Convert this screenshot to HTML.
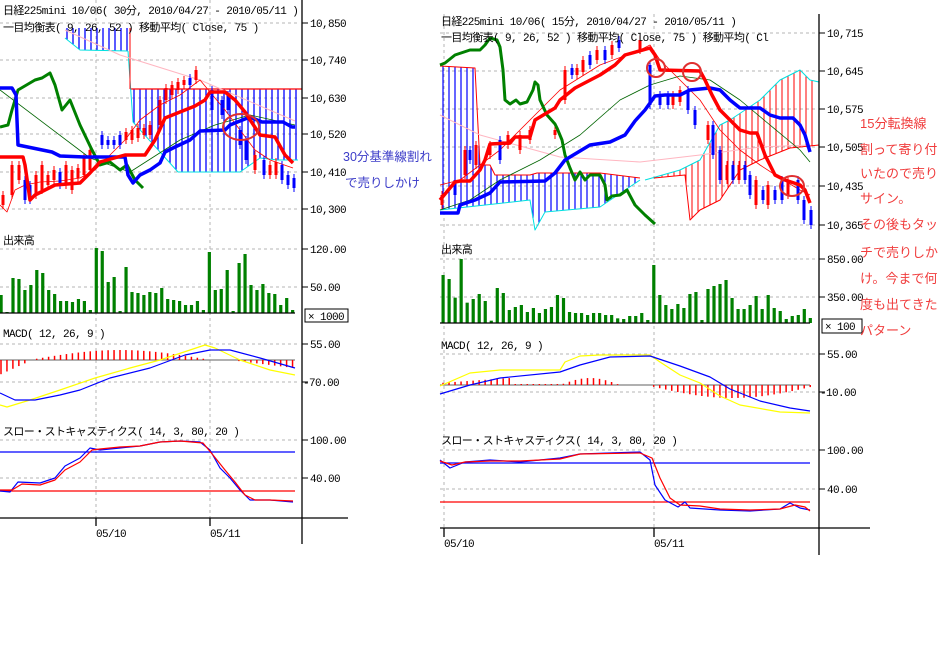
<!DOCTYPE html>
<html><head><meta charset="utf-8"><style>
html,body{margin:0;padding:0;background:#fff;width:948px;height:652px;overflow:hidden}
svg{display:block}
.t{font-family:"Liberation Mono","Noto Sans CJK JP",monospace;font-size:11px;letter-spacing:-0.6px;fill:#000}
.a{font-family:"Liberation Sans","Noto Sans CJK JP",sans-serif;font-size:13px;fill:#f03c3c}
</style></head><body>
<svg id="s" width="948" height="652" xmlns="http://www.w3.org/2000/svg">
<g id="g"></g>
<g stroke="#000" stroke-width="1.3" fill="none">
<line x1="302" y1="0" x2="302" y2="544"/>
<line x1="0" y1="313" x2="295" y2="313"/>
<line x1="0" y1="518" x2="348" y2="518"/>
<line x1="96" y1="518" x2="96" y2="526"/>
<line x1="210" y1="518" x2="210" y2="526"/>
<rect x="305" y="309" width="43" height="13" stroke-width="1"/>
<line x1="819" y1="14" x2="819" y2="555"/>
<line x1="440" y1="323" x2="810" y2="323"/>
<line x1="440" y1="528" x2="870" y2="528"/>
<line x1="444" y1="528" x2="444" y2="537"/>
<line x1="654" y1="528" x2="654" y2="537"/>
<rect x="822" y="319" width="40" height="14" stroke-width="1"/>
</g>
<g stroke="#000" stroke-width="1">
<line x1="302" y1="23" x2="308" y2="23"/><line x1="302" y1="60" x2="308" y2="60"/><line x1="302" y1="98" x2="308" y2="98"/><line x1="302" y1="134" x2="308" y2="134"/><line x1="302" y1="172" x2="308" y2="172"/><line x1="302" y1="209" x2="308" y2="209"/>
<line x1="302" y1="249" x2="308" y2="249"/><line x1="302" y1="287" x2="308" y2="287"/><line x1="302" y1="344" x2="308" y2="344"/><line x1="302" y1="382" x2="308" y2="382"/><line x1="302" y1="440" x2="308" y2="440"/><line x1="302" y1="478" x2="308" y2="478"/>
<line x1="819" y1="33" x2="825" y2="33"/><line x1="819" y1="71" x2="825" y2="71"/><line x1="819" y1="109" x2="825" y2="109"/><line x1="819" y1="147" x2="825" y2="147"/><line x1="819" y1="186" x2="825" y2="186"/><line x1="819" y1="225" x2="825" y2="225"/>
<line x1="819" y1="259" x2="825" y2="259"/><line x1="819" y1="297" x2="825" y2="297"/><line x1="819" y1="354" x2="825" y2="354"/><line x1="819" y1="392" x2="825" y2="392"/><line x1="819" y1="450" x2="825" y2="450"/><line x1="819" y1="489" x2="825" y2="489"/>
</g>
<g class="t">
<text x="3" y="14">日経225mini 10/06( 30分, 2010/04/27 - 2010/05/11 )</text>
<text x="3" y="31">一目均衡表( 9, 26, 52 )   移動平均( Close, 75 )</text>
<text x="310" y="27">10,850</text><text x="310" y="64">10,740</text><text x="310" y="102">10,630</text><text x="310" y="138">10,520</text><text x="310" y="176">10,410</text><text x="310" y="213">10,300</text>
<text x="3" y="244">出来高</text>
<text x="310" y="253">120.00</text><text x="310" y="291">50.00</text>
<text x="308" y="320">× 1000</text>
<text x="3" y="337">MACD( 12, 26, 9 )</text>
<text x="310" y="348">55.00</text><text x="303" y="386">-70.00</text>
<text x="3" y="435">スロー・ストキャスティクス( 14, 3, 80, 20 )</text>
<text x="310" y="444">100.00</text><text x="310" y="482">40.00</text>
<text x="96" y="537">05/10</text><text x="210" y="537">05/11</text>
<text x="441" y="25">日経225mini 10/06( 15分, 2010/04/27 - 2010/05/11 )</text>
<text x="441" y="41">一目均衡表( 9, 26, 52 )   移動平均( Close, 75 )   移動平均( Cl</text>
<text x="827" y="37">10,715</text><text x="827" y="75">10,645</text><text x="827" y="113">10,575</text><text x="827" y="151">10,505</text><text x="827" y="190">10,435</text><text x="827" y="229">10,365</text>
<text x="441" y="253">出来高</text>
<text x="827" y="263">850.00</text><text x="827" y="301">350.00</text>
<text x="825" y="330">× 100</text>
<text x="441" y="349">MACD( 12, 26, 9 )</text>
<text x="827" y="358">55.00</text><text x="820" y="396">-10.00</text>
<text x="441" y="444">スロー・ストキャスティクス( 14, 3, 80, 20 )</text>
<text x="827" y="454">100.00</text><text x="827" y="493">40.00</text>
<text x="444" y="547">05/10</text><text x="654" y="547">05/11</text>
</g>
<g style="font-family:'Liberation Sans','Noto Sans CJK JP',sans-serif;font-size:12.5px;fill:#3c3cc8">
<text x="343" y="161">30分基準線割れ</text><text x="345" y="187">で売りしかけ</text>
</g>
<g class="a">
<text x="860" y="128">15分転換線</text><text x="860" y="154">割って寄り付</text><text x="860" y="178">いたので売り</text><text x="860" y="203">サイン。</text><text x="860" y="229">その後もタッ</text><text x="860" y="257">チで売りしか</text><text x="860" y="283">け。今まで何</text><text x="860" y="309">度も出てきた</text><text x="860" y="335">パターン</text>
</g>
</svg>
<script>
var g=document.getElementById('g'),NS='http://www.w3.org/2000/svg';
function el(n,a){var e=document.createElementNS(NS,n);for(var k in a)e.setAttribute(k,a[k]);g.appendChild(e);return e}
function L(x1,y1,x2,y2,c,w,d){var o={x1:x1,y1:y1,x2:x2,y2:y2,stroke:c,'stroke-width':w||1};if(d)o['stroke-dasharray']=d;el('line',o)}
function P(p,c,w){el('polyline',{points:p,fill:'none',stroke:c,'stroke-width':w||1,'stroke-linejoin':'round'})}
var D='3,3',gc='#b4b4b4';
[23,60,98,134,172,209,249,287,344,382,440,478].forEach(function(y){L(0,y,300,y,gc,1,D)});
[96,210].forEach(function(x){L(x,0,x,518,gc,1,D)});
[33,71,109,147,186,225,259,297,354,392,450,489].forEach(function(y){L(440,y,817,y,gc,1,D)});
[444,654].forEach(function(x){L(x,14,x,528,gc,1,D)});
function yAt(pts,x){for(var i=0;i<pts.length-1;i++){var a=pts[i],b=pts[i+1];if(x>=a[0]&&x<=b[0]){return a[1]+(b[1]-a[1])*(x-a[0])/((b[0]-a[0])||1)}}return pts[pts.length-1][1]}
function S(p){return p.map(function(q){return q.join(',')}).join(' ')}
var lb1=[[65,38],[80,50],[128,51]];
for(var x=67;x<128;x+=6)L(x,28,x,yAt(lb1,x),'#0000ff',1.3);
P(S(lb1),'#00e0e0',1);
var lt=[[130,89],[302,89]],lb=[[128,51],[133,122],[178,172],[240,172],[260,158],[278,160],[298,160]];
for(var x=134;x<300;x+=6)L(x,89,x,yAt(lb,x),'#0000ff',1.3);
P(S(lt),'#ff0000',1.2);P(S(lb),'#00e0e0',1);
L(130,28,130,89,'#ff0000',1);
P('65,30 120,55 200,80 295,121','#ffb6c1',1);
P('0,90 90,158 130,172 180,140 215,125 250,115 295,125','#006400',0.8);
P('0,205 7,212 15,190 25,185 40,182 60,181 80,178 95,170 110,155 125,140 140,120 160,105 180,95 200,80 210,92 225,110 240,130 255,150 270,160 293,168','#ff0000',0.8);
var lc=[[3,195,205,'r'],[12,165,195,'r'],[19,165,180,'r'],[25,180,200,'b'],[30,185,200,'b'],[36,175,195,'r'],[42,165,190,'r'],[48,175,185,'r'],[54,170,180,'r'],[60,172,185,'b'],[66,165,185,'r'],[72,170,190,'r'],[78,168,178,'r'],[84,158,175,'r'],[90,150,170,'r'],[102,135,145,'b'],[108,140,145,'b'],[114,140,145,'b'],[120,135,145,'b'],[126,132,140,'r'],[132,130,140,'r'],[138,128,138,'r'],[144,128,135,'r'],[150,125,135,'r'],[160,100,125,'r'],[166,88,100,'r'],[172,85,95,'r'],[178,82,90,'r'],[184,80,85,'r'],[190,78,85,'b'],[196,70,80,'r'],[212,90,110,'b'],[222,100,115,'b'],[228,95,110,'b'],[240,130,145,'b'],[246,140,160,'b'],[255,155,170,'r'],[264,160,175,'b'],[270,165,175,'r'],[276,162,175,'r'],[282,165,180,'b'],[288,175,185,'b'],[294,178,188,'b']];
lc.forEach(function(c){var col=c[3]=='r'?'#ff0000':'#0000ff';L(c[0],c[1]-4,c[0],c[2]+4,col,1);el('rect',{x:c[0]-1.5,y:c[1],width:3,height:c[2]-c[1],fill:col})});
P('0,127 8,125 12,110 18,90 35,80 42,78 50,73 55,85 62,110 70,100 80,125 92,150 100,165 110,162 120,170 127,165 135,180 143,188','#008000',3);
P('0,88 12,88 16,95 18,145 52,152 60,156 85,157 125,157 128,175 133,183 140,175 150,170 160,163 165,152 175,147 190,140 200,131 225,130 230,125 250,117 262,122 283,122 292,127 295,127','#0000ff',3.5);
P('0,157 23,157 25,165 30,200 35,195 45,190 55,185 80,183 90,173 100,162 125,155 145,155 155,140 165,118 180,112 195,106 205,100 210,92 225,92 235,100 245,112 260,135 275,137 285,155 293,163','#ff0000',3.5);
el('ellipse',{cx:241,cy:127,rx:18,ry:13,fill:'none',stroke:'#e03030','stroke-width':2});
var lv=[295,312,278,279,290,285,270,273,290,294,301,301,302,299,301,310,248,251,282,277,311,267,292,293,295,292,293,288,299,300,301,305,305,301,310,252,290,289,270,311,263,254,285,290,284,293,294,305,298,310];
lv.forEach(function(t,i){var x=1+i*5.95;el('rect',{x:x-1.5,y:t,width:3.2,height:313-t,fill:'#008000'})});
L(0,360,295,360,'#808080',1.2);
for(var i=0;i<50;i++){var x=1+i*5.95,h;if(x<30)h=(30-x)/2.2+1;else if(x<35)h=0;else if(x<205)h=-Math.sin((x-35)/170*Math.PI)*9-1;else if(x<230)h=0;else h=(x-230)/8;if(Math.abs(h)>0.5)L(x,360,x,360+h,'#ff0000',1.5)}
P('0,405 7,407 30,400 60,390 95,378 130,368 160,360 190,350 205,345 215,348 240,360 270,370 295,375','#ffff00',1.2);
P('0,393 15,400 35,400 60,395 80,390 110,378 150,368 185,355 210,350 230,350 260,358 295,368','#0000ff',1.2);
L(0,452,295,452,'#0000ff',1.2);L(0,491,295,491,'#ff0000',1.2);
P('0,491 10,492 18,482 40,483 55,478 65,466 80,458 90,448 100,450 120,448 140,446 160,442 180,441 200,442 210,450 220,468 230,478 240,490 250,500 270,500 293,502','#0000ff',1.2);
P('0,490 12,490 22,484 40,485 55,480 65,470 80,462 92,450 100,449 120,447 140,446 160,442 180,441 203,443 213,455 225,470 235,482 245,495 255,500 270,500 293,501','#ff0000',1.2);
var rt=[[440,66],[475,68],[480,165],[490,165],[495,175],[530,175],[537,173],[600,173],[640,178]],rb=[[440,210],[530,200],[535,230],[545,212],[600,207],[640,180]];
for(var x=443;x<640;x+=6)L(x,yAt(rt,x),x,yAt(rb,x),'#0000ff',1.2);
P(S(rt),'#ff0000',1);P(S(rb),'#00e0e0',1);
var ct=[[645,180],[680,170],[700,160],[720,125],[730,120],[760,100],[780,80],[800,70],[810,80],[819,82]],cb=[[654,178],[685,175],[690,220],[700,210],[720,200],[740,170],[760,160],[790,148],[800,147],[819,145]];
for(var x=656;x<818;x+=6){var a=yAt(ct,x),b=yAt(cb,x);L(x,Math.min(a,b),x,Math.max(a,b),'#ff0000',1)}
P(S(ct),'#00e0e0',1);P(S(cb),'#ff0000',1);
P('440,115 480,135 560,157 640,162 700,155 760,147 810,145','#ffb6c1',1);
P('440,210 470,200 500,180 540,160 580,135 620,100 650,85 680,76 710,80 740,100 770,125 800,150 810,162','#006400',0.8);
P('440,185 460,180 480,165 500,150 520,130 540,110 560,90 600,65 640,50 650,45 660,60 680,80 700,100 720,130 740,150 760,165 780,178 800,190 810,195','#ff0000',0.8);
var rc=[[442,195,205,'r'],[455,180,195,'b'],[465,150,175,'r'],[470,150,160,'b'],[476,145,165,'r'],[490,145,155,'r'],[500,140,160,'b'],[508,135,145,'r'],[520,135,150,'r'],[530,130,140,'r'],[555,130,135,'r'],[565,70,100,'r'],[572,68,75,'b'],[577,68,75,'r'],[583,60,72,'r'],[590,55,65,'b'],[597,50,60,'r'],[605,50,60,'b'],[612,45,55,'r'],[619,40,48,'b'],[640,40,50,'r'],[650,65,105,'b'],[660,95,105,'b'],[668,95,105,'b'],[673,95,105,'r'],[680,90,102,'r'],[688,90,110,'b'],[695,110,125,'b'],[708,125,140,'r'],[713,125,155,'b'],[720,150,180,'b'],[727,165,180,'r'],[733,165,180,'b'],[739,165,180,'r'],[745,165,180,'b'],[750,175,195,'b'],[756,180,205,'r'],[763,190,200,'b'],[768,185,205,'r'],[775,190,200,'b'],[782,180,200,'b'],[788,180,195,'r'],[798,180,200,'b'],[804,200,220,'b'],[811,210,225,'b']];
rc.forEach(function(c){var col=c[3]=='r'?'#ff0000':'#0000ff';L(c[0],c[1]-4,c[0],c[2]+4,col,1);el('rect',{x:c[0]-1.5,y:c[1],width:3,height:c[2]-c[1],fill:col})});
P('440,65 445,63 455,55 470,50 480,50 485,45 490,38 497,40 500,47 503,70 505,100 510,104 516,100 520,104 527,102 533,90 535,82 538,85 540,100 547,115 555,124 557,128 562,140 565,155 570,168 575,180 580,172 585,180 590,175 600,175 605,185 607,200 612,196 620,195 627,190 635,205 645,215 655,224','#008000',3);
P('440,213 458,213 460,205 475,200 490,193 500,182 545,181 555,173 565,160 590,145 610,142 625,135 635,121 645,110 655,96 665,95 680,95 690,90 710,88 720,90 730,100 740,108 760,108 770,115 780,118 793,118 800,125 805,135 810,152','#0000ff',3.5);
P('440,200 455,182 460,181 470,181 480,170 485,160 490,144 510,143 515,137 530,137 535,120 555,108 560,100 575,88 600,75 615,65 625,55 650,48 655,55 660,70 700,71 705,80 712,95 720,110 730,120 740,130 750,133 757,133 765,155 775,175 785,180 800,185 805,190 810,203','#ff0000',3.5);
el('circle',{cx:656,cy:68,r:9,fill:'none',stroke:'#e03030','stroke-width':2});
el('circle',{cx:692,cy:72,r:9,fill:'none',stroke:'#e03030','stroke-width':2});
el('ellipse',{cx:792,cy:186,rx:12,ry:10,fill:'none',stroke:'#e03030','stroke-width':2});
var rv=[135,147,203,87,218,207,192,213,272,174,189,240,231,225,246,234,249,237,231,195,204,246,249,249,255,249,249,255,255,265,267,258,258,249,270,105,195,225,237,222,234,192,186,270,177,168,162,150,204,237,237,225,198,237,195,234,243,267,258,255,237,264];
rv.forEach(function(t,i){var x=443+i*6.02,y=230+t/3;el('rect',{x:x-1.5,y:y,width:3.2,height:323-y,fill:'#008000'})});
L(440,385,810,385,'#808080',1.2);
for(var i=0;i<62;i++){var x=443+i*6.02,h;if(x<650){h=-(x<510?(x-440)/14+2:(x<560?1:(x<620?Math.sin((x-560)/60*Math.PI)*7:0)))}else{h=Math.sin((x-650)/165*Math.PI)*12+1}if(Math.abs(h)>0.6)L(x,385,x,385+h,'#ff0000',1.5)}
P('440,386 470,373 500,370 560,370 565,362 580,356 600,355 650,355 660,362 680,375 700,383 720,396 740,405 780,412 810,413','#ffff00',1.2);
P('440,394 470,385 500,378 560,372 580,365 610,357 650,356 680,366 710,377 730,389 760,401 790,408 810,411','#0000ff',1.2);
L(440,463,810,463,'#0000ff',1.2);L(440,502,810,502,'#ff0000',1.2);
P('440,460 450,468 465,462 490,460 520,462 560,458 580,454 640,452 650,460 655,485 665,500 678,507 685,502 690,508 720,510 750,511 780,509 790,503 800,508 810,510','#0000ff',1.2);
P('440,461 452,465 465,462 490,461 520,461 560,459 580,454 640,453 652,458 660,478 670,498 680,505 700,506 720,509 750,510 780,509 795,505 805,507 810,511','#ff0000',1.2);
</script>
</body></html>
